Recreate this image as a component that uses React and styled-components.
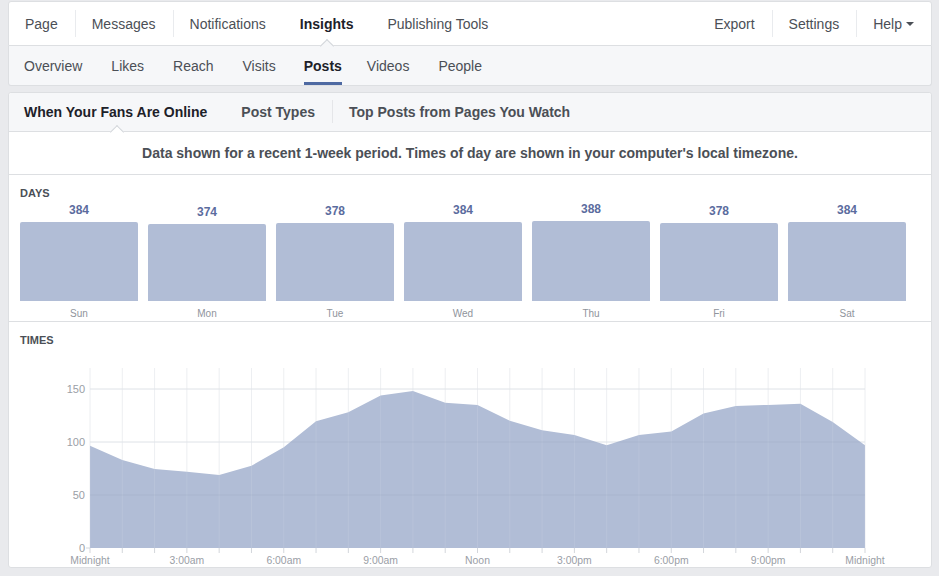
import styled, { createGlobalStyle, css } from "styled-components";

const GlobalStyle = createGlobalStyle`
  *, *::before, *::after { box-sizing: border-box; }
  html, body { margin: 0; padding: 0; background: #e9eaed; }
  body {
    font-family: "Liberation Sans", Arial, Helvetica, sans-serif;
    color: #4b4f56;
  }
`;

const Page = styled.div`
  width: 932px;
  padding: 1px 0 0 8px;
`;

const TopNav = styled.div`
  display: flex;
  justify-content: space-between;
  height: 45px;
  background: #fff;
  border: 1px solid #dddfe2;
  border-radius: 3px 3px 0 0;
`;

const NavGroup = styled.div`
  display: flex;
`;

const notch = (bg) => css`
  &::after {
    content: "";
    position: absolute;
    left: 50%;
    bottom: -6px;
    width: 10px;
    height: 10px;
    margin-left: -5px;
    background: ${bg};
    border-top: 1px solid #d3d6db;
    border-left: 1px solid #d3d6db;
    transform: rotate(45deg);
    z-index: 2;
  }
`;

const NavItem = styled.div`
  position: relative;
  display: flex;
  align-items: center;
  padding: 0 17px;
  font-size: 14px;
  color: ${(p) => (p.$active ? "#1d2129" : "#4b4f56")};
  font-weight: ${(p) => (p.$active ? 700 : 400)};
  &:first-child {
    padding-left: 16px;
  }
  & + &::before {
    content: "";
    position: absolute;
    left: 0;
    top: 8px;
    bottom: 8px;
    width: 1px;
    background: #e9ebee;
  }
  ${(p) => p.$active && notch("#f6f7f9")}
`;

const Caret = styled.span`
  width: 0;
  height: 0;
  margin-left: 4px;
  margin-top: 1px;
  border-left: 4px solid transparent;
  border-right: 4px solid transparent;
  border-top: 4px solid #4b4f56;
`;

const SubNav = styled.div`
  display: flex;
  height: 40px;
  background: #f6f7f9;
  border: 1px solid #dddfe2;
  border-top: none;
  border-radius: 0 0 3px 3px;
`;

const SubItem = styled.div`
  display: flex;
  align-items: center;
  margin: 0 14.5px;
  padding-top: 3px;
  font-size: 14px;
  color: #4b4f56;
  border-bottom: 3px solid transparent;
  &:first-child {
    margin-left: 15px;
  }
  ${(p) =>
    p.$active &&
    css`
      margin: 0 10.5px 0 13.5px;
      color: #1d2129;
      font-weight: 700;
      border-bottom-color: #4e69a2;
    `}
`;

const Card = styled.div`
  margin-top: 6px;
  background: #fff;
  border: 1px solid #dddfe2;
  border-radius: 3px;
`;

const CardHeader = styled.div`
  display: flex;
  height: 39px;
  background: #f6f7f9;
  border-bottom: 1px solid #dddfe2;
  border-radius: 3px 3px 0 0;
`;

const CardTab = styled.div`
  position: relative;
  display: flex;
  align-items: center;
  padding: 0 17px;
  font-size: 14px;
  font-weight: 700;
  color: ${(p) => (p.$active ? "#1d2129" : "#4b4f56")};
  &:first-child {
    padding-left: 15px;
  }
  & + &::before {
    content: "";
    position: absolute;
    left: 0;
    top: 7px;
    bottom: 8px;
    width: 1px;
    background: #e5e6e9;
  }
  ${(p) => p.$active && notch("#fff")}
`;

const Notice = styled.div`
  display: flex;
  align-items: center;
  justify-content: center;
  height: 43px;
  font-size: 14px;
  font-weight: 700;
  color: #4b4f56;
  border-bottom: 1px solid #dddfe2;
`;

const Section = styled.div`
  height: ${(p) => p.$height}px;
  padding: 11px 26px 0 11px;
  border-bottom: ${(p) => (p.$last ? "none" : "1px solid #dddfe2")};
`;

const SectionTitle = styled.div`
  font-size: 11px;
  line-height: 14px;
  font-weight: 700;
  color: #4b4f56;
  text-transform: uppercase;
`;

const DayGrid = styled.div`
  display: grid;
  grid-template-columns: repeat(7, 118px);
  column-gap: 10px;
  margin-top: 1px;
`;

const DayColumn = styled.div`
  display: flex;
  flex-direction: column;
  align-items: center;
`;

const BarSlot = styled.div`
  display: flex;
  flex-direction: column;
  justify-content: flex-end;
  align-items: center;
  width: 100%;
  height: 100px;
`;

const BarValue = styled.div`
  font-size: 12px;
  line-height: 15px;
  font-weight: 700;
  color: #5b6c9e;
  margin-bottom: 4px;
`;

const Bar = styled.div`
  width: 100%;
  background: #b1bdd6;
  border-radius: 2px 2px 0 0;
`;

const DayLabel = styled.div`
  margin-top: 7px;
  font-size: 10px;
  line-height: 12px;
  color: #90949c;
`;

const ChartSvg = styled.svg`
  display: block;
  margin: 7px 0 0 -11px;
  font-family: "Liberation Sans", Arial, sans-serif;
`;

const days = [
  ["Sun", 384],
  ["Mon", 374],
  ["Tue", 378],
  ["Wed", 384],
  ["Thu", 388],
  ["Fri", 378],
  ["Sat", 384],
];

const hours = [
  96.5, 83, 74.5, 72, 69, 77.6, 95, 119.5, 128, 144, 148, 137, 135, 120, 111,
  106.6, 97, 106.6, 110, 127, 134, 135, 136, 119, 97,
];

const X0 = 81;
const X1 = 856;
const Y0 = 194;
const YTOP = 14;
const px = (i) => X0 + (i * (X1 - X0)) / 24;
const py = (v) => Y0 - v * 1.06;

const xLabels = ["Midnight", "3:00am", "6:00am", "9:00am", "Noon", "3:00pm", "6:00pm", "9:00pm", "Midnight"];

function TimesChart() {
  const area =
    `M${X0},${Y0} ` +
    hours.map((v, i) => `L${px(i).toFixed(1)},${py(v).toFixed(1)}`).join(" ") +
    ` L${X1},${Y0} Z`;

  return (
    <ChartSvg width="922" height="213" viewBox="0 0 922 213">
      {hours.map((_, i) => (
        <line key={"v" + i} x1={px(i)} x2={px(i)} y1={YTOP} y2={Y0} stroke="#eceef1" strokeWidth="1" />
      ))}
      {[50, 100, 150].map((v) => (
        <line key={"h" + v} x1={X0} x2={X1} y1={py(v)} y2={py(v)} stroke="#eceef1" strokeWidth="1" />
      ))}
      <path d={area} fill="#b1bdd6" />
      {hours.map((_, i) => (
        <line key={"vo" + i} x1={px(i)} x2={px(i)} y1={YTOP} y2={Y0} stroke="rgba(255,255,255,0.1)" strokeWidth="1" />
      ))}
      {[50, 100, 150].map((v) => (
        <line key={"ho" + v} x1={X0} x2={X1} y1={py(v)} y2={py(v)} stroke="rgba(90,100,130,0.08)" strokeWidth="1" />
      ))}
      {hours.map((_, i) => (
        <line key={"t" + i} x1={px(i)} x2={px(i)} y1={Y0} y2={Y0 + 5} stroke="#d3d6db" strokeWidth="1" />
      ))}
      <line x1={X0 - 4} x2={X0} y1={Y0} y2={Y0} stroke="#d3d6db" strokeWidth="1" />
      {[0, 50, 100, 150].map((v) => (
        <text key={"yl" + v} x={76} y={py(v) + 4} textAnchor="end" fontSize="11" fill="#9a9ea6">
          {v}
        </text>
      ))}
      {xLabels.map((l, k) => (
        <text key={"xl" + k} x={px(k * 3)} y={210} textAnchor="middle" fontSize="10.4" fill="#9a9ea6">
          {l}
        </text>
      ))}
    </ChartSvg>
  );
}

export default function App() {
  return (
    <Page>
      <GlobalStyle />
      <TopNav>
        <NavGroup>
          <NavItem>Page</NavItem>
          <NavItem>Messages</NavItem>
          <NavItem>Notifications</NavItem>
          <NavItem $active>Insights</NavItem>
          <NavItem>Publishing Tools</NavItem>
        </NavGroup>
        <NavGroup>
          <NavItem>Export</NavItem>
          <NavItem>Settings</NavItem>
          <NavItem>
            Help<Caret />
          </NavItem>
        </NavGroup>
      </TopNav>

      <SubNav>
        <SubItem>Overview</SubItem>
        <SubItem>Likes</SubItem>
        <SubItem>Reach</SubItem>
        <SubItem>Visits</SubItem>
        <SubItem $active>Posts</SubItem>
        <SubItem>Videos</SubItem>
        <SubItem>People</SubItem>
      </SubNav>

      <Card>
        <CardHeader>
          <CardTab $active>When Your Fans Are Online</CardTab>
          <CardTab>Post Types</CardTab>
          <CardTab>Top Posts from Pages You Watch</CardTab>
        </CardHeader>

        <Notice>
          Data shown for a recent 1-week period. Times of day are shown in your computer's local timezone.
        </Notice>

        <Section $height={147}>
          <SectionTitle>Days</SectionTitle>
          <DayGrid>
            {days.map(([name, value]) => (
              <DayColumn key={name}>
                <BarSlot>
                  <BarValue>{value}</BarValue>
                  <Bar style={{ height: `${(value / 388) * 80}px` }} />
                </BarSlot>
                <DayLabel>{name}</DayLabel>
              </DayColumn>
            ))}
          </DayGrid>
        </Section>

        <Section $height={245} $last>
          <SectionTitle>Times</SectionTitle>
          <TimesChart />
        </Section>
      </Card>
    </Page>
  );
}
